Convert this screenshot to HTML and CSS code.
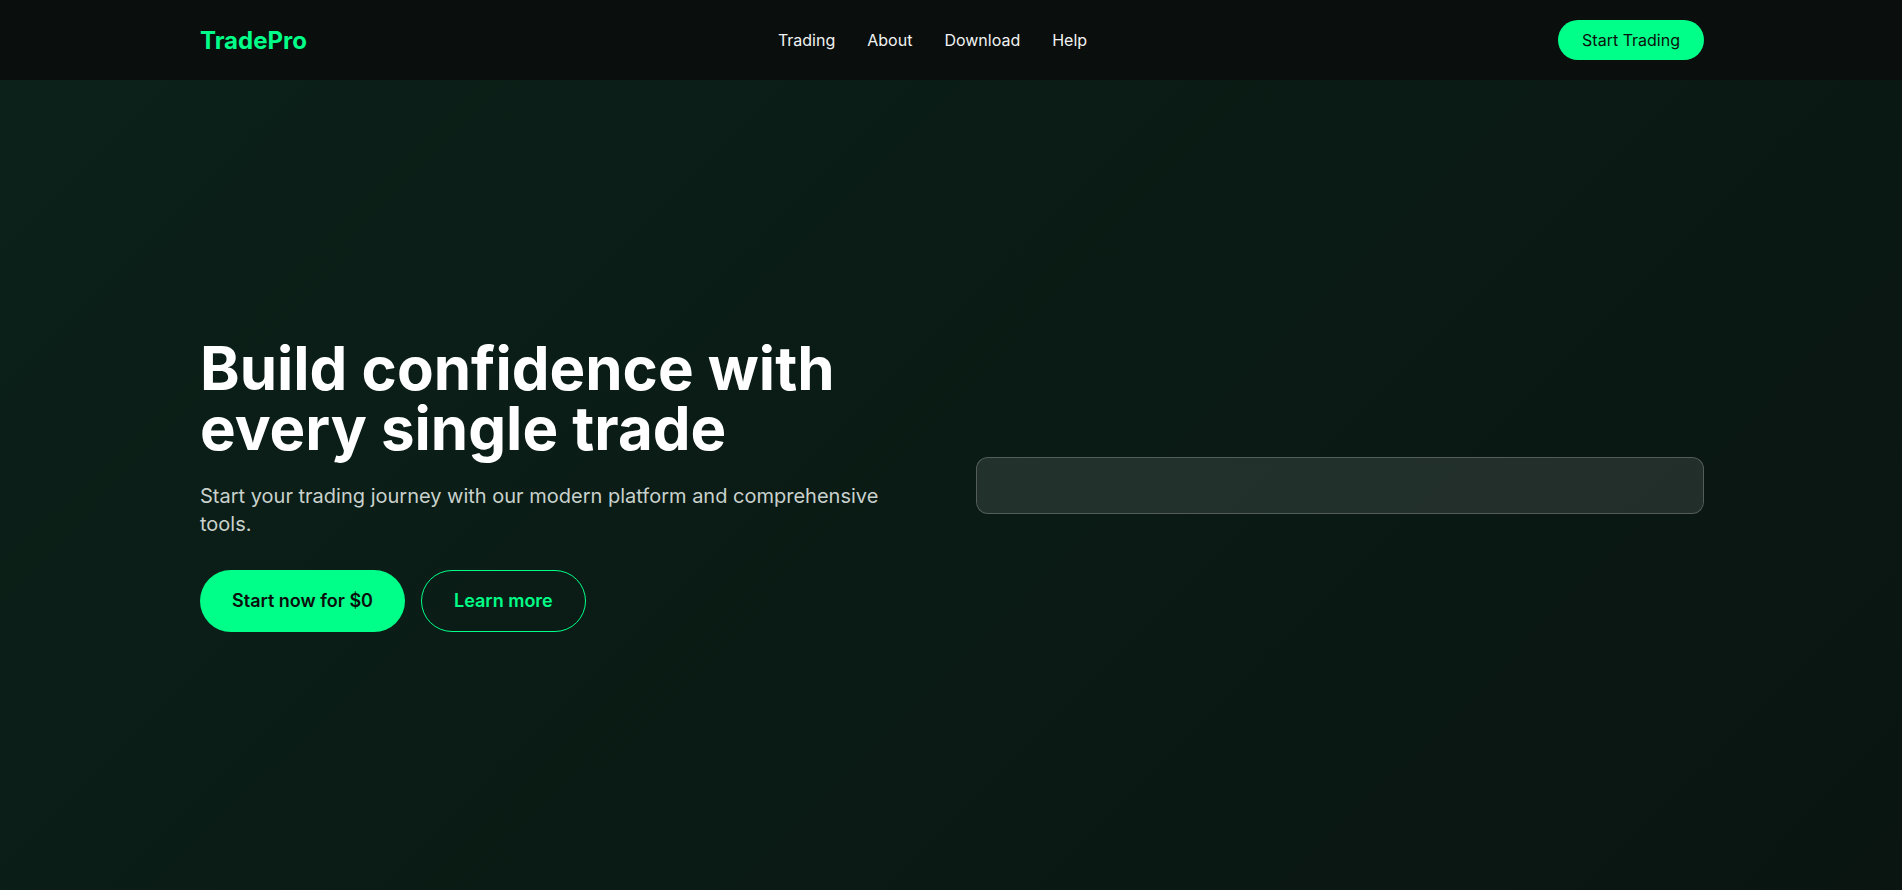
FILE: index.html
```html
<!DOCTYPE html>
<html lang="en">
<head>
<meta charset="utf-8">
<title>TradePro</title>
<link rel="stylesheet" href="styles.css">
</head>
<body>
<header class="site-header">
  <div class="container header-inner">
    <a class="logo" href="#">TradePro</a>
    <nav class="nav">
      <a href="#">Trading</a>
      <a href="#">About</a>
      <a href="#">Download</a>
      <a href="#">Help</a>
    </nav>
    <a class="btn-header" href="#">Start Trading</a>
  </div>
</header>
<main class="hero">
  <div class="container hero-grid">
    <div class="hero-copy">
      <h1 class="hero-title">Build confidence with every single trade</h1>
      <p class="hero-text">Start your trading journey with our modern platform and comprehensive tools.</p>
      <div class="hero-actions">
        <a class="btn btn-primary" href="#">Start now for $0</a>
        <a class="btn btn-outline" href="#">Learn more</a>
      </div>
    </div>
    <div class="hero-visual">
      <div class="glass-panel"></div>
    </div>
  </div>
</main>
</body>
</html>
```

FILE: styles.css
```css
* { box-sizing: border-box; }
html, body { margin: 0; padding: 0; }
body {
  font-family: Inter, "Noto Sans", "Liberation Sans", sans-serif;
  background: #0a1a13;
  color: #ffffff;
  height: 890px;
  overflow: hidden;
}
a { text-decoration: none; color: inherit; }

.container {
  max-width: 1536px;
  margin: 0 auto;
  padding: 0 15px 0 17px;
}

.site-header {
  background: #0a0e0d;
  height: 80px;
}
.header-inner {
  height: 80px;
  display: flex;
  align-items: center;
  justify-content: space-between;
}
.logo {
  color: #00ff88;
  font-size: 24px;
  font-weight: 700;
}
.nav {
  display: flex;
  gap: 32px;
  font-size: 16px;
  color: #f1f3f2;
}
.btn-header {
  background: #00ff88;
  color: #0a0f0d;
  font-size: 16px;
  line-height: 24px;
  padding: 8px 24px;
  border-radius: 999px;
}

.hero {
  height: 810px;
  display: flex;
  align-items: center;
  background: linear-gradient(135deg, #0b2119 0%, #0a1a14 55%, #0a1511 100%);
}
.hero-grid {
  width: 100%;
  display: grid;
  grid-template-columns: 1fr 1fr;
  gap: 48px;
  align-items: center;
}
.hero-title {
  margin: 0;
  font-size: 60px;
  line-height: 60px;
  font-weight: 700;
  color: #ffffff;
}
.hero-text {
  margin: 24px 0 0;
  font-size: 20px;
  line-height: 28px;
  color: #c9d1cd;
}
.hero-actions {
  display: flex;
  gap: 16px;
  margin-top: 32px;
}
.btn {
  display: inline-block;
  font-size: 18px;
  line-height: 28px;
  font-weight: 600;
  padding: 16px 32px;
  border-radius: 999px;
}
.btn-primary {
  background: #00ff88;
  color: #0a0f0d;
  padding: 17px 32px;
}
.btn-outline {
  color: #00ff88;
  border: 1px solid #00ff88;
}

.glass-panel {
  height: 57px;
  border-radius: 12px;
  background: rgba(255, 255, 255, 0.1);
  border: 1px solid rgba(255, 255, 255, 0.22);
}
```
